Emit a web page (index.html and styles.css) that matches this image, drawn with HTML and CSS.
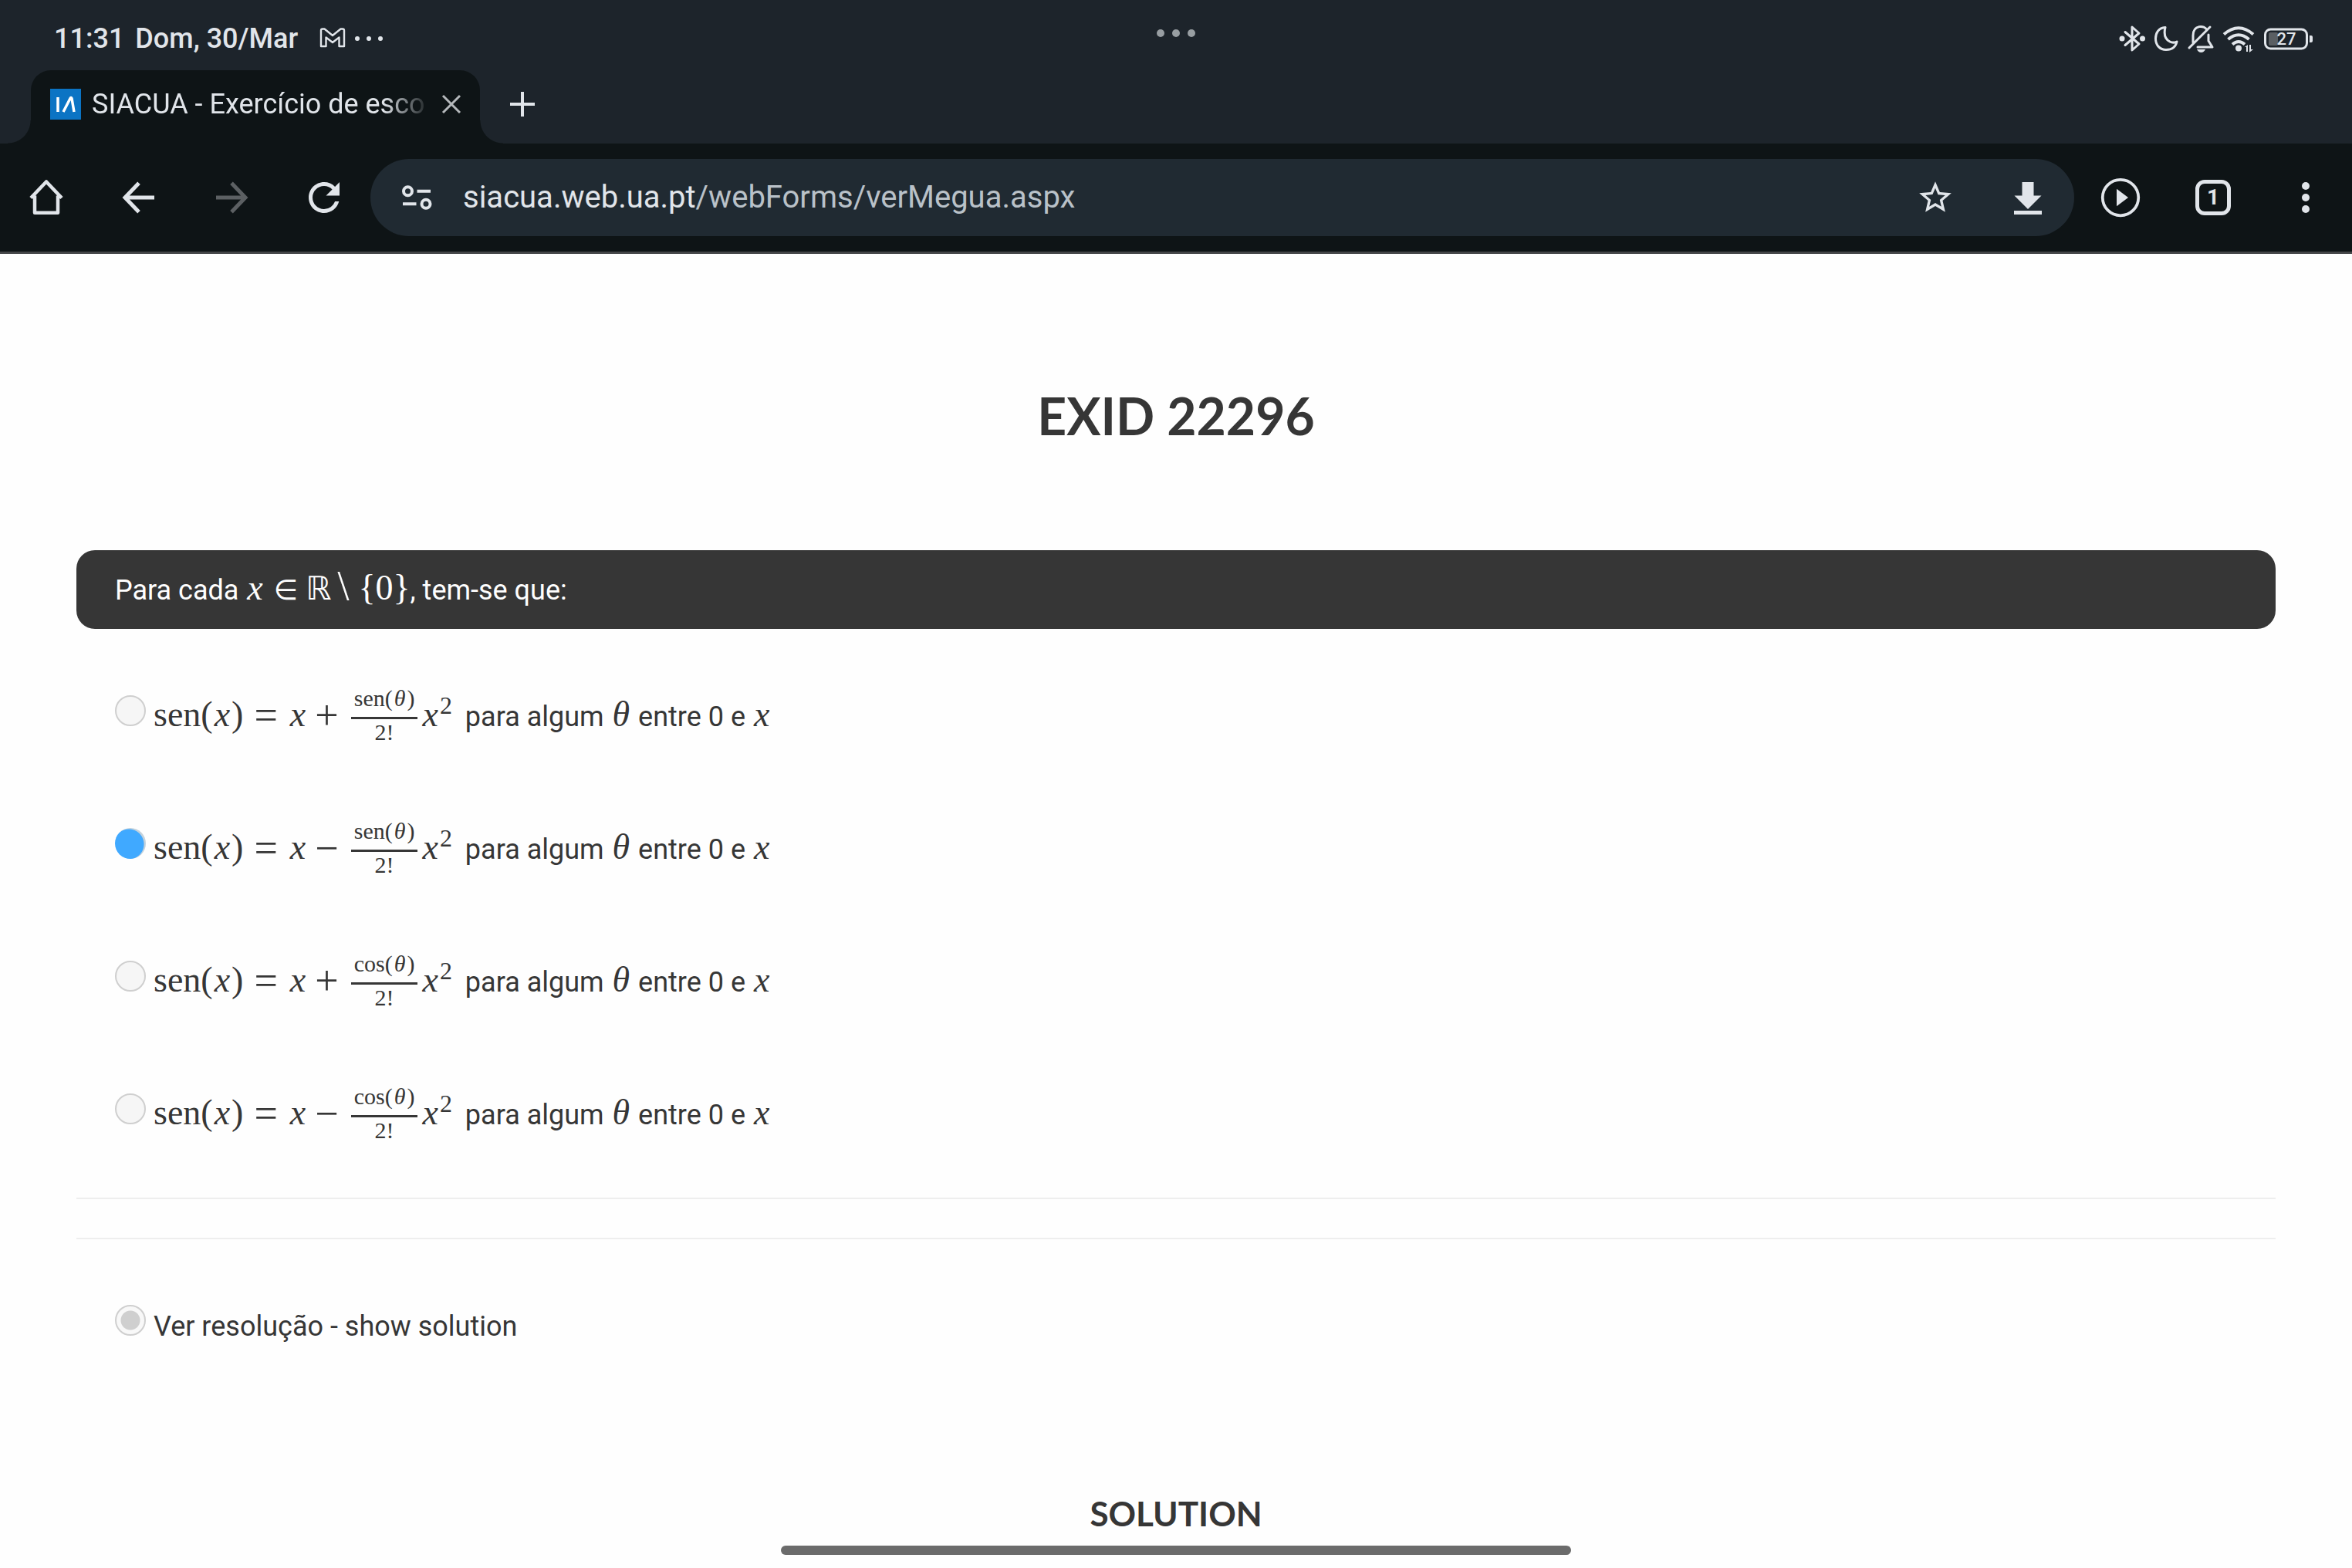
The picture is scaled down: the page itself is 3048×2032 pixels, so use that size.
FILE: index.html
```html
<!DOCTYPE html>
<html lang="pt">
<head>
<meta charset="utf-8">
<title>SIACUA - Exercício de escolha múltipla</title>
<link rel="stylesheet" href="styles.css">
</head>
<body>
<header class="browser">
  <div class="status">
    <div class="status-left">
      <span>11:31</span>
      <span>Dom, 30/Mar</span>
      <svg class="notices" width="84" height="40" viewBox="0 0 84 40" aria-hidden="true">
        <path d="M2 30V9.500q0-2 2-2h2.500L17 16l10.500-8.500H30q2 0 2 2V30h-6.500V18.500L17 25l-8.500-6.500V30z" fill="none" stroke="currentColor" stroke-width="2.400" stroke-linejoin="round"/>
        <circle cx="49" cy="20" r="3"/><circle cx="64" cy="20" r="3"/><circle cx="79" cy="20" r="3"/>
      </svg>
    </div>
    <div class="status-right">
      <svg width="34" height="40" viewBox="0 0 34 40" aria-hidden="true">
        <path d="M8 11.500L26 27l-9 8V5l9 8L8 28.500" fill="none" stroke="currentColor" stroke-width="3" stroke-linejoin="round" stroke-linecap="round"/>
        <circle cx="4" cy="20" r="3.500"/><circle cx="30.500" cy="20" r="3.500"/>
      </svg>
      <svg width="34" height="40" viewBox="0 0 34 40" aria-hidden="true">
        <path d="M16 5.500C7 6 3.500 13 3.500 20c0 9 6 14.500 13.500 14.500 7 0 12.500-3.500 14-10.500-3 1.500-6 1.500-9 0-6-3-8-10-6-18.500z" fill="none" stroke="currentColor" stroke-width="3" stroke-linejoin="round"/>
      </svg>
      <svg width="36" height="40" viewBox="0 0 36 40" aria-hidden="true">
        <path d="M8 25V16C8 2 23 2 26 9M28 15v8l5 8H14M3 32L30 5" fill="none" stroke="currentColor" stroke-width="3" stroke-linejoin="round" stroke-linecap="round"/>
        <path d="M13 34h11q-2 4-5.500 4t-5.500-4z"/>
      </svg>
      <svg width="42" height="40" viewBox="0 0 42 40" aria-hidden="true">
        <path d="M2 14.500Q21-2 40 14.500M7.500 21Q21 9.500 34.500 21M13 27.500q8-7 16 0" fill="none" stroke="currentColor" stroke-width="4"/>
        <circle cx="21" cy="32.500" r="4"/>
        <path d="M29 31l4-3v9h-2v-6zM35 28h2v6h3l-5 4z"/>
      </svg>
      <svg width="66" height="40" viewBox="0 0 66 40" aria-hidden="true">
        <rect x="3.500" y="8" width="54" height="25" rx="7" fill="none" stroke="currentColor" stroke-width="3"/>
        <rect x="8" y="12" width="12" height="17" rx="2" fill="#5a5f63"/>
        <path d="M61 16h2q2 0 2 2v5q0 2-2 2h-2z"/>
        <text class="battery-level" x="31" y="28" text-anchor="middle">27</text>
      </svg>
    </div>
    <svg class="window-handle" width="50" height="10" viewBox="0 0 50 10" aria-hidden="true"><circle cx="5" cy="5" r="5"/><circle cx="25" cy="5" r="5"/><circle cx="45" cy="5" r="5"/></svg>
  </div>

  <div class="tabs">
    <div class="tab">
      <svg class="favicon" width="40" height="40" viewBox="0 0 40 40" aria-hidden="true">
        <rect width="40" height="40" fill="#0b74c4"/>
        <path d="M10 11v19M17 30L26 12.500q1-2 2 0L31 30" fill="none" stroke="#fff" stroke-width="3.500"/>
      </svg>
      <span class="tab-title">SIACUA - Exercício de esco</span>
      <button class="tab-close" type="button" aria-label="Fechar separador"><svg width="26" height="26" viewBox="0 0 26 26"><path d="M2 2l22 22M24 2L2 24" fill="none" stroke="currentColor" stroke-width="3"/></svg></button>
    </div>
    <button class="tab-new" type="button" aria-label="Novo separador"><svg width="34" height="34" viewBox="0 0 34 34"><path d="M17 1v32M1 17h32" fill="none" stroke="currentColor" stroke-width="4"/></svg></button>
  </div>

  <nav class="toolbar">
    <button class="tool" type="button" aria-label="Início"><svg class="icon" viewBox="0 0 24 24"><path d="M4 12.200L12 3.800l8 8.400M6 11v8.900h12V11" fill="none" stroke="currentColor" stroke-width="1.800" stroke-linejoin="round"/></svg></button>
    <button class="tool" type="button" aria-label="Retroceder"><svg class="icon" viewBox="0 0 24 24"><path d="M12 4.500L4.800 12l7.200 7.500M5 12h15" fill="none" stroke="currentColor" stroke-width="2"/></svg></button>
    <button class="tool tool-off" type="button" aria-label="Avançar" disabled><svg class="icon" viewBox="0 0 24 24"><path d="M12 4.500l7.200 7.500-7.200 7.500M19 12H4" fill="none" stroke="currentColor" stroke-width="2"/></svg></button>
    <button class="tool" type="button" aria-label="Recarregar"><svg class="icon" viewBox="0 0 24 24"><path d="M17.650 6.350A7.958 7.958 0 0 0 12 4c-4.420 0-7.990 3.580-7.990 8s3.570 8 7.990 8c3.730 0 6.840-2.550 7.730-6h-2.080A5.990 5.990 0 0 1 12 18c-3.310 0-6-2.690-6-6s2.690-6 6-6c1.660 0 3.140.69 4.220 1.780L13 11h7V4z"/></svg></button>
    <div class="omnibox">
      <button class="tool" type="button" aria-label="Informações do site"><svg class="icon" viewBox="0 0 24 24"><g fill="none" stroke="currentColor" stroke-width="1.600"><circle cx="7.400" cy="8.700" r="2.200"/><circle cx="16.800" cy="15.300" r="2.200"/><path d="M12.200 8.700h7M4.800 15.300h7"/></g></svg></button>
      <a class="url" href="#">siacua.web.ua.pt<span class="url-path">/webForms/verMegua.aspx</span></a>
      <button class="tool" type="button" aria-label="Adicionar aos favoritos"><svg class="icon-small" viewBox="0 0 24 24"><path d="M22 9.240l-7.190-.62L12 2 9.190 8.630 2 9.240l5.460 4.730L5.820 21 12 17.270 18.180 21l-1.630-7.030zM12 15.400l-3.760 2.270 1-4.280-3.320-2.880 4.380-.38L12 6.100l1.710 4.040 4.380.38-3.320 2.880 1 4.280z"/></svg></button>
      <button class="tool" type="button" aria-label="Transferir"><svg class="icon" viewBox="0 0 24 24"><path d="M19 11h-4V4H9v7H5l7 7zM4.800 18.800v2h14.400v-2z"/></svg></button>
    </div>
    <button class="tool" type="button" aria-label="Reproduzir"><svg class="icon" viewBox="0 0 24 24"><path d="M10 16.500l6-4.500-6-4.500z"/><circle cx="12" cy="12" r="9.300" fill="none" stroke="currentColor" stroke-width="1.500"/></svg></button>
    <button class="tool" type="button" aria-label="Separadores"><span class="tab-count">1</span></button>
    <button class="tool" type="button" aria-label="Menu"><svg class="icon" viewBox="0 0 24 24"><circle cx="12" cy="6" r="2"/><circle cx="12" cy="12" r="2"/><circle cx="12" cy="18" r="2"/></svg></button>
  </nav>
</header>

<main class="page">
  <h1 class="title">EXID 22296</h1>
  <p class="question">Para cada <span class="math"><i>x</i><span class="in">∈</span><span class="set">ℝ</span><span class="setminus">\</span>{0}</span>, tem-se que:</p>
  <form>
    <div class="options">
      <div class="option">
        <input class="radio" type="radio" name="answer" id="a1">
        <label for="a1"><span class="math">sen(<i>x</i>)<span class="rel">=</span><i>x</i><span class="op">+</span><span class="frac"><span class="num">sen(<i>θ</i>)</span><span class="den">2!</span></span><i>x</i><sup>2</sup></span> para algum <i class="math">θ</i> entre 0 e <i class="math">x</i></label>
      </div>
      <div class="option">
        <input class="radio" type="radio" name="answer" id="a2" checked>
        <label for="a2"><span class="math">sen(<i>x</i>)<span class="rel">=</span><i>x</i><span class="op">−</span><span class="frac"><span class="num">sen(<i>θ</i>)</span><span class="den">2!</span></span><i>x</i><sup>2</sup></span> para algum <i class="math">θ</i> entre 0 e <i class="math">x</i></label>
      </div>
      <div class="option">
        <input class="radio" type="radio" name="answer" id="a3">
        <label for="a3"><span class="math">sen(<i>x</i>)<span class="rel">=</span><i>x</i><span class="op">+</span><span class="frac"><span class="num">cos(<i>θ</i>)</span><span class="den">2!</span></span><i>x</i><sup>2</sup></span> para algum <i class="math">θ</i> entre 0 e <i class="math">x</i></label>
      </div>
      <div class="option">
        <input class="radio" type="radio" name="answer" id="a4">
        <label for="a4"><span class="math">sen(<i>x</i>)<span class="rel">=</span><i>x</i><span class="op">−</span><span class="frac"><span class="num">cos(<i>θ</i>)</span><span class="den">2!</span></span><i>x</i><sup>2</sup></span> para algum <i class="math">θ</i> entre 0 e <i class="math">x</i></label>
      </div>
    </div>
    <hr class="rule">
    <hr class="rule">
    <div class="option option-solution">
      <input class="radio radio-locked" type="radio" name="solution" id="sol" checked disabled>
      <label for="sol">Ver resolução - show solution</label>
    </div>
  </form>
  <h2 class="subtitle">SOLUTION</h2>
</main>
<div class="home-indicator"></div>
</body>
</html>
```

FILE: styles.css
```css
* {
  box-sizing: border-box;
}

body {
  margin: 0;
  background: #fefefe;
  color: #363636;
  font: 36px/60px Roboto, sans-serif;
}

button {
  display: grid;
  place-items: center;
  padding: 0;
  border: 0;
  background: none;
  color: inherit;
  font: inherit;
}

svg {
  display: block;
  flex: none;
  fill: currentColor;
}

/* Browser chrome */
.browser {
  background: #1d242b;
  color: #e1e5ea;
  border-bottom: 3px solid #444648;
}

.status {
  position: relative;
  display: flex;
  justify-content: space-between;
  align-items: center;
  height: 91px;
  padding: 8px 50px 0 70px;
  font-weight: 500;
}

.status-left {
  display: flex;
  align-items: center;
  gap: 14px;
}

.notices {
  margin-left: 14px;
}

.status-right {
  display: flex;
  gap: 10px;
}

.battery-level {
  font-size: 22px;
  font-weight: 500;
}

.window-handle {
  position: absolute;
  top: 38px;
  left: 50%;
  transform: translateX(-50%);
  color: #989ea2;
}

.tabs {
  display: flex;
  height: 95px;
  padding-left: 40px;
}

.tab {
  position: relative;
  display: flex;
  align-items: center;
  width: 582px;
  padding: 0 24px 8px 25px;
  border-radius: 26px 26px 0 0;
  background: #0e1416;
}

.tab::before,
.tab::after {
  content: "";
  position: absolute;
  bottom: 0;
  width: 30px;
  height: 30px;
}

.tab::before {
  right: 100%;
  background: radial-gradient(circle at 0 0, transparent 29px, #0e1416 30px);
}

.tab::after {
  left: 100%;
  background: radial-gradient(circle at 100% 0, transparent 29px, #0e1416 30px);
}

.tab-title {
  flex: 1;
  margin: 0 14px;
  overflow: hidden;
  white-space: nowrap;
  -webkit-mask-image: linear-gradient(to right, #000 86%, transparent);
  mask-image: linear-gradient(to right, #000 86%, transparent);
}

.tab-close {
  color: #b4b8bb;
}

.tab-new {
  width: 110px;
  padding-bottom: 8px;
}

.toolbar {
  display: flex;
  align-items: center;
  height: 140px;
  background: #0e1416;
}

.tool {
  flex: none;
  width: 120px;
  height: 100px;
}

.tool-off {
  color: #5c6063;
}

.icon {
  width: 60px;
  height: 60px;
}

.icon-small {
  width: 50px;
  height: 50px;
}

.omnibox {
  flex: 1;
  display: flex;
  align-items: center;
  height: 100px;
  border-radius: 50px;
  background: #202a32;
}

.url {
  flex: 1;
  color: #e1e5ea;
  font-size: 40px;
  text-decoration: none;
}

.url-path {
  color: #b9c1c8;
}

.tab-count {
  width: 46px;
  height: 46px;
  border: 5px solid;
  border-radius: 12px;
  font-size: 28px;
  font-weight: 700;
  line-height: 36px;
}

/* Exercise */
.page {
  padding: 170px 99px 0;
}

.title,
.subtitle {
  margin: 0;
  font-family: Lato, sans-serif;
  font-weight: 700;
  text-align: center;
}

.title {
  font-size: 66px;
  line-height: 80px;
}

.question {
  margin: 134px 0 20px;
  padding: 21px 50px 19px;
  border-radius: 24px;
  background: #363636;
  color: #fefefe;
  line-height: 62px;
}

.option {
  display: flex;
  align-items: baseline;
  gap: 10px;
  height: 172px;
  padding: 53px 50px 0;
}

.radio {
  appearance: none;
  flex: none;
  width: 40px;
  height: 40px;
  margin: 0;
  border: 2px solid #cfcfcf;
  border-radius: 50%;
  background: #f6f6f6;
}

.radio:checked {
  border: 0;
  background: radial-gradient(circle at 18px 21px, #40a9ff 19px, #c4d2dc 20px);
}

.radio-locked:checked {
  border: 2px solid #cfcfcf;
  background: radial-gradient(circle, #cfcfcf 12px, #f8f8f8 13px);
}

.rule {
  margin: 29px 0 50px;
  border: 0;
  border-top: 2px solid #eee;
}

.rule + .rule {
  margin: 0;
}

.option-solution {
  height: 200px;
  padding-top: 83px;
}

.subtitle {
  margin-top: 125px;
  font-size: 44px;
}

/* Formulas */
.math {
  font-family: "Liberation Serif", serif;
  font-size: 46px;
  line-height: 46px;
}

.math i,
i.math {
  margin: 0 2px;
}

.in,
.set {
  font-family: "DejaVu Sans", sans-serif;
}

.in {
  margin: 0 10px 0 12px;
  font-size: 36px;
}

.set {
  font-size: 42px;
}

.setminus {
  margin: 0 12px 0 8px;
  font-size: 54px;
}

.rel,
.op {
  font-size: 54px;
  vertical-align: -4px;
}

.rel {
  margin: 0 14px;
}

.op {
  margin: 0 12px 0 10px;
}

.frac {
  display: inline-block;
  vertical-align: middle;
  margin: 0 4px;
  font-size: 30px;
  line-height: 34px;
  text-align: center;
}

.num,
.den {
  display: block;
  padding: 0 4px 7px;
}

.num {
  border-bottom: 3px solid;
}

.math sup {
  margin-right: 8px;
  font-size: 32px;
  line-height: 0;
  vertical-align: 16px;
}

.home-indicator {
  position: fixed;
  bottom: 17px;
  left: 50%;
  width: 1024px;
  height: 12px;
  border-radius: 6px;
  background: #6b6b6b;
  transform: translateX(-50%);
}
```
